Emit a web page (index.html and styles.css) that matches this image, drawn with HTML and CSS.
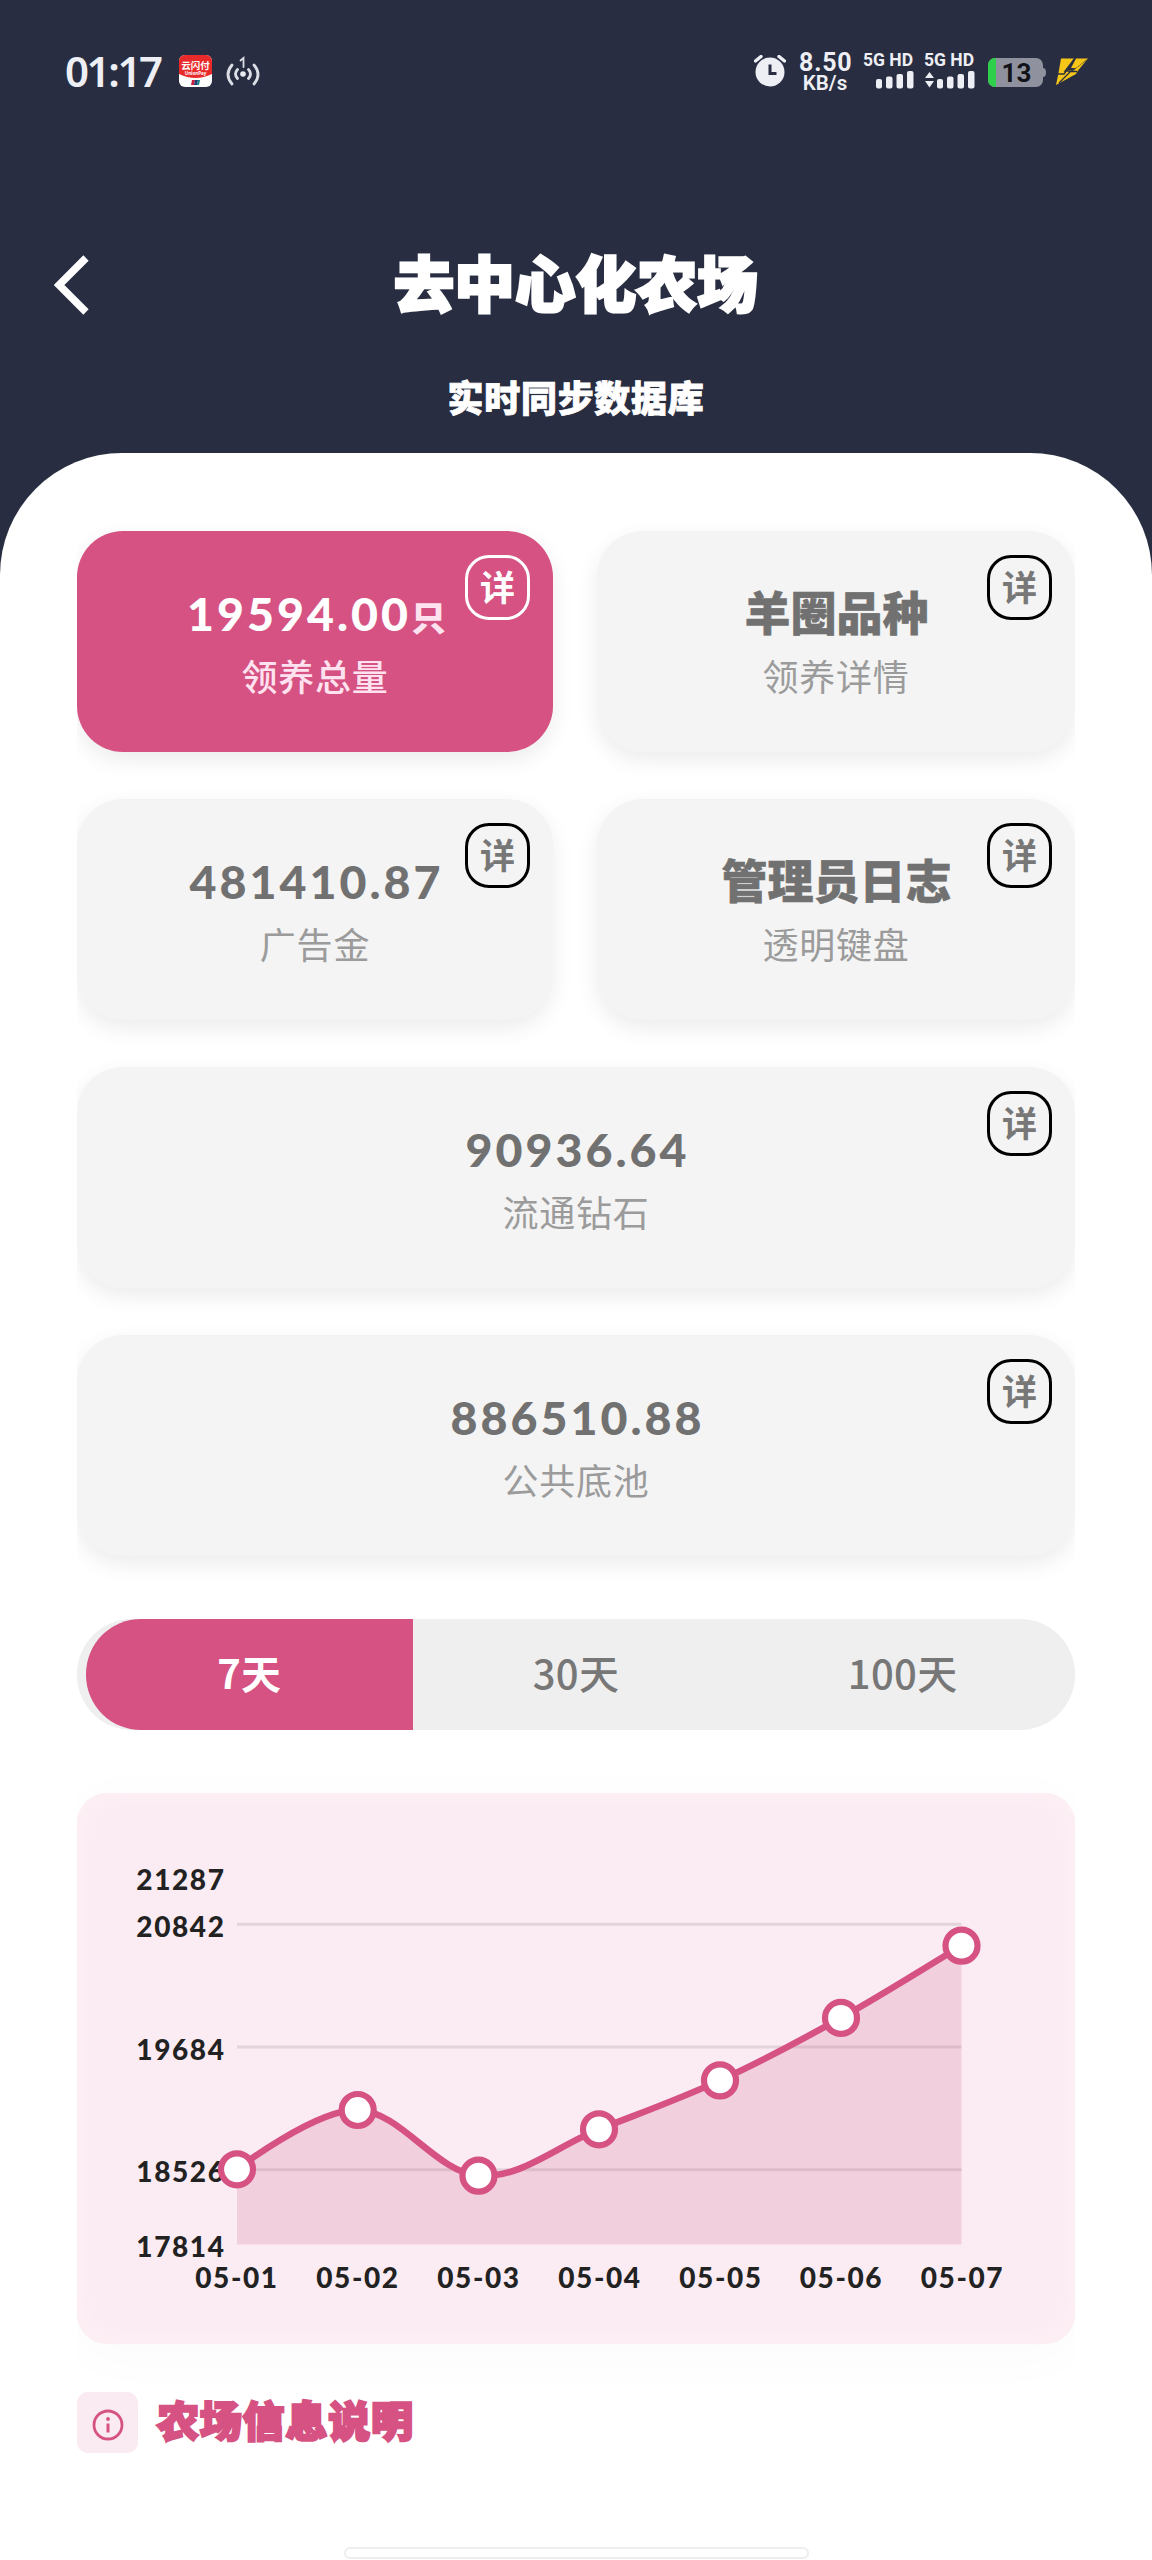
FILE: index.html
```html
<!DOCTYPE html>
<html lang="zh-CN">
<head>
<meta charset="utf-8">
<title>去中心化农场</title>
<link rel="stylesheet" href="styles.css">
</head>
<body>
<div class="screen">
  <div class="status">
    <div class="status-side">
      <span class="clock">01:17</span>
      <svg class="pay" width="33" height="32" viewBox="0 0 33 32">
        <rect width="33" height="32" rx="6" fill="#fff"/>
        <path d="M6 0H27a6 6 0 0 1 6 6V19Q16.500 27 0 19V6A6 6 0 0 1 6 0Z" fill="#e92a2a"/>
        <text class="pay-name" x="16.500" y="14">云闪付</text>
        <text class="pay-latin" x="16.500" y="19.500">UnionPay</text>
        <path d="M13 25h3l-1 5h-3z" fill="#c8203c"/>
        <path d="M16 25h3l-1 5h-3z" fill="#1f3f77"/>
        <path d="M19 25h2l-1 5h-2z" fill="#168080"/>
      </svg>
      <svg class="hotspot" width="34" height="32" viewBox="0 0 34 32" fill="none" stroke="#dcdee6" stroke-width="2.800" stroke-linecap="round">
        <circle cx="17" cy="18" r="2.800" fill="#e9ebf2" stroke="none"/>
        <path d="M11.500 13.500q-4 4.500 0 9M22.500 13.500q4 4.500 0 9M6 9q-8 9.500 0 19M28 9q8 9.500 0 19"/>
        <path d="M14.500 4.500L17.500 2V11" stroke-width="1.800"/>
      </svg>
    </div>
    <div class="status-side">
      <svg class="alarm" width="32" height="32" viewBox="0 0 32 32">
        <circle cx="16" cy="17" r="14.500" fill="#eeeff4"/>
        <path d="M1.500 6L7 1.500M30.500 6L25 1.500" stroke="#eeeff4" stroke-width="3.400" stroke-linecap="round"/>
        <path d="M16 9.500V18.500H22.500" stroke="#282d41" stroke-width="3" fill="none"/>
      </svg>
      <div class="speed"><span class="speed-n">8.50</span><span class="speed-u">KB/s</span></div>
      <div class="net">
        <span class="net-t">5G HD</span>
        <svg width="52" height="19" viewBox="0 0 52 19" fill="#eeeff4"><rect x="13" y="9" width="6" height="9.500" rx="2"/><rect x="23" y="6.500" width="6.500" height="12" rx="2"/><rect x="33.500" y="4" width="6.500" height="14.500" rx="2"/><rect x="44" y="1" width="6.500" height="17.500" rx="2"/></svg>
      </div>
      <div class="net second">
        <span class="net-t">5G HD</span>
        <svg width="52" height="19" viewBox="0 0 52 19" fill="#eeeff4"><path d="M1 8L5.500 2L10 8ZM1 11L5.500 17.500L10 11Z"/><rect x="13" y="9" width="6" height="9.500" rx="2"/><rect x="23" y="6.500" width="6.500" height="12" rx="2"/><rect x="33.500" y="4" width="6.500" height="14.500" rx="2"/><rect x="44" y="1" width="6.500" height="17.500" rx="2"/></svg>
      </div>
      <svg class="battery" width="58" height="29" viewBox="0 0 58 29">
        <rect width="55" height="29" rx="7" fill="#8f929e"/>
        <path d="M55 10q3 0 3 4.500t-3 4.500z" fill="#8f929e"/>
        <path d="M8 0V29H7a7 7 0 0 1-7-7V7A7 7 0 0 1 7 0Z" fill="#2ed04b"/>
        <text class="battery-n" x="28.500" y="24">13</text>
      </svg>
      <svg class="bolt" width="32" height="27" viewBox="0 0 32 27">
        <path d="M5 0.500H18L11 12H16L32 0.500L22 12.500L20 16L0 27L2.500 15Z" fill="#f5c518"/>
        <path d="M19 0L9 13H15L3 25M31 1L15 13.500H21M2 16H8L20 0" fill="none" stroke="#282d41" stroke-width="1.300"/>
        <path d="M20 .5H32L20 10H15Z" fill="#f5c518"/>
      </svg>
    </div>
  </div>

  <header class="head">
    <svg class="back" width="36" height="60" viewBox="0 0 36 60"><path d="M32 3L5 30L32 57" fill="none" stroke="#fff" stroke-width="7.500"/></svg>
    <h1 class="title">去中心化农场</h1>
  </header>
  <p class="subtitle">实时同步数据库</p>

  <main class="sheet">
    <div class="content">
      <section class="cards">
        <article class="card active"><span class="badge">详</span><div class="value">19594.00<small class="unit">只</small></div><div class="label">领养总量</div></article>
        <article class="card"><span class="badge">详</span><div class="value cjk">羊圈品种</div><div class="label">领养详情</div></article>
        <article class="card"><span class="badge">详</span><div class="value">481410.87</div><div class="label">广告金</div></article>
        <article class="card"><span class="badge">详</span><div class="value cjk">管理员日志</div><div class="label">透明键盘</div></article>
        <article class="card wide"><span class="badge">详</span><div class="value">90936.64</div><div class="label">流通钻石</div></article>
        <article class="card wide"><span class="badge">详</span><div class="value">886510.88</div><div class="label">公共底池</div></article>
      </section>

      <nav class="tabs">
        <span class="tab on">7天</span>
        <span class="tab">30天</span>
        <span class="tab">100天</span>
      </nav>

      <section class="chart">
        <svg width="998" height="551" viewBox="0 0 998 551">
          <g class="axis y-axis">
            <text x="148.500" y="96.500">21287</text>
            <text x="148.500" y="144">20842</text>
            <text x="148.500" y="266.500">19684</text>
            <text x="148.500" y="389">18526</text>
            <text x="148.500" y="464">17814</text>
          </g>
          <path d="M160 131.300H884.500M160 254H884.500M160 376.700H884.500" stroke="#e2d3dc" stroke-width="3"/>
          <path d="M160 376.300C160 376.300 238.400 315.900 280.700 317C323 318.100 359.300 379.300 401.500 382.700C443.700 386.100 479.700 353 522 336.300C564.300 319.600 600.700 306.900 643 287.400C685.300 267.900 721.700 248.500 764 224.900C806.300 201.300 863.400 165.300 884.500 152.700V451.500H160Z" fill="#d36080" fill-opacity=".2"/>
          <path d="M160 376.300C160 376.300 238.400 315.900 280.700 317C323 318.100 359.300 379.300 401.500 382.700C443.700 386.100 479.700 353 522 336.300C564.300 319.600 600.700 306.900 643 287.400C685.300 267.900 721.700 248.500 764 224.900C806.300 201.300 863.400 165.300 884.500 152.700" fill="none" stroke="#d55282" stroke-width="6.500"/>
          <g fill="#fff" stroke="#d55282" stroke-width="6.200">
            <circle cx="160" cy="376.300" r="16"/><circle cx="280.700" cy="317" r="16"/><circle cx="401.500" cy="382.700" r="16"/><circle cx="522" cy="336.300" r="16"/><circle cx="643" cy="287.400" r="16"/><circle cx="764" cy="224.900" r="16"/><circle cx="884.500" cy="152.700" r="16"/>
          </g>
          <g class="axis x-axis">
            <text x="160" y="495">05-01</text>
            <text x="281" y="495">05-02</text>
            <text x="402" y="495">05-03</text>
            <text x="523" y="495">05-04</text>
            <text x="644" y="495">05-05</text>
            <text x="764.500" y="495">05-06</text>
            <text x="885.500" y="495">05-07</text>
          </g>
        </svg>
      </section>
    </div>

    <section class="info">
      <span class="info-icon">
        <svg width="32" height="32" viewBox="0 0 32 32"><circle cx="16" cy="16" r="14" fill="none" stroke="#d55282" stroke-width="2.800"/><circle cx="16" cy="10" r="1.900" fill="#d55282"/><path d="M16 14.500V23.500" stroke="#d55282" stroke-width="3"/></svg>
      </span>
      <h2 class="info-title">农场信息说明</h2>
    </section>
    <div class="home"></div>
  </main>
</div>
</body>
</html>
```

FILE: styles.css
```css
* { box-sizing: border-box; margin: 0; padding: 0; }
body { width: 1152px; background: #282d41; font-family: "Noto Sans CJK SC", sans-serif; }
svg { display: block; flex: none; }
.screen { height: 2560px; overflow: hidden; }

.status { height: 244px; padding: 52px 64px 0 65px; display: flex; justify-content: space-between; align-items: flex-start; color: #eeeff4; }
.status-side { display: flex; height: 40px; white-space: nowrap; }
.clock { width: 98px; font: 600 42px/37px "Noto Sans", sans-serif; letter-spacing: -2.4px; }
.pay { margin: 3px 0 0 16px; }
.pay-name { font: 700 9.500px "Noto Sans CJK SC", sans-serif; fill: #fff; text-anchor: middle; }
.pay-latin { font: 700 4.500px "Noto Sans", sans-serif; fill: #fff; text-anchor: middle; }
.hotspot { margin: 4px 0 0 14px; }
.alarm { margin-top: 3px; }
.speed { width: 52px; margin-left: 13px; text-align: center; display: flex; flex-direction: column; font-family: Roboto, sans-serif; font-weight: 700; }
.speed-n { font-size: 25px; line-height: 21px; letter-spacing: .8px; }
.speed-u { font-size: 20.5px; line-height: 20px; font-weight: 600; }
.net { width: 52px; margin-left: 12px; }
.net.second { margin-left: 9px; }
.net-t { display: block; height: 18px; font: 700 17.5px/16px Roboto, sans-serif; letter-spacing: 0; }
.battery { margin: 6px 0 0 12px; overflow: visible; }
.battery-n { font: 700 26px Roboto, sans-serif; text-anchor: middle; fill: #111319; }
.bolt { margin: 6px 0 0 10px; }

.head { height: 70px; padding: 0 54px; display: grid; grid-template-columns: 36px 1fr 36px; align-items: center; }
.back { margin-top: 9px; }
.title { margin-top: 2px; text-align: center; font-size: 60px; line-height: 70px; font-weight: 900; letter-spacing: .7px; color: #fff; -webkit-text-stroke: 3px #fff; }
.subtitle { margin-top: 57px; height: 82px; text-align: center; font-size: 36px; line-height: 50px; font-weight: 900; letter-spacing: .7px; color: #fff; -webkit-text-stroke: .8px #fff; }

.sheet { height: 2107px; background: #fff; border-radius: 122px 122px 0 0; padding: 0 77px; }
.content { height: 1939px; padding-top: 78px; overflow: hidden; }
.cards { display: grid; grid-template-columns: 476px 478px; gap: 47px 44px; }
.card { position: relative; height: 221px; padding-top: 52px; border-radius: 46px; background: #f4f4f4; text-align: center; color: #717171; box-shadow: 0 8px 22px rgba(0,0,0,.08); }
.card.wide { grid-column: 1 / -1; }
.card.active { background: #d55282; color: #fff; }
.value { height: 60px; padding-left: 3px; font: 900 46.500px/60px Lato, "Noto Sans CJK SC", sans-serif; letter-spacing: 3px; }
.value.cjk { padding-left: 1px; font-size: 46px; letter-spacing: 0; -webkit-text-stroke: .6px #717171; }
.unit { font-size: 35px; line-height: 1; letter-spacing: 0; color: #ffe2f0; }
.label { margin-top: 8px; font-size: 36px; line-height: 48px; letter-spacing: .8px; color: #9b9b9b; }
.active .label { color: #ffe2f0; font-weight: 500; }
.badge { position: absolute; top: 24px; right: 23px; width: 65px; height: 65px; border: 3px solid #000; border-radius: 24px; font-size: 35px; line-height: 55px; font-weight: 700; color: #777; }
.active .badge { border-color: #fff; color: #fff; }

.tabs { margin-top: 63px; height: 111px; padding: 0 9px; display: grid; grid-template-columns: repeat(3, 1fr); background: #efefef; border-radius: 55px; }
.tab { text-align: center; font-size: 40px; line-height: 107px; font-weight: 500; letter-spacing: .3px; color: #777; }
.tab.on { background: #d55282; color: #fff; font-weight: 700; border-radius: 55px 0 0 55px; }

.chart { margin-top: 63px; height: 551px; border-radius: 30px; background: #fbecf3; box-shadow: 0 10px 60px rgba(80,0,30,.025), inset 0 0 28px rgba(255,245,246,.6); }
.axis { font: 900 28px Lato, sans-serif; letter-spacing: 1.600px; fill: #222; }
.y-axis { text-anchor: end; }
.x-axis { text-anchor: middle; }

.info { height: 61px; display: flex; }
.info-icon { width: 61px; height: 61px; border-radius: 11px; background: #faebf2; display: grid; place-items: center; padding-top: 4px; }
.info-title { margin-left: 19px; height: 61px; font-size: 42px; line-height: 54px; font-weight: 900; letter-spacing: .8px; color: #d55282; -webkit-text-stroke: 2.400px #d55282; }
.home { width: 465px; height: 12px; margin: 94px auto 0; border: 2px solid #eee; border-radius: 6px; background: #fff; }
```
